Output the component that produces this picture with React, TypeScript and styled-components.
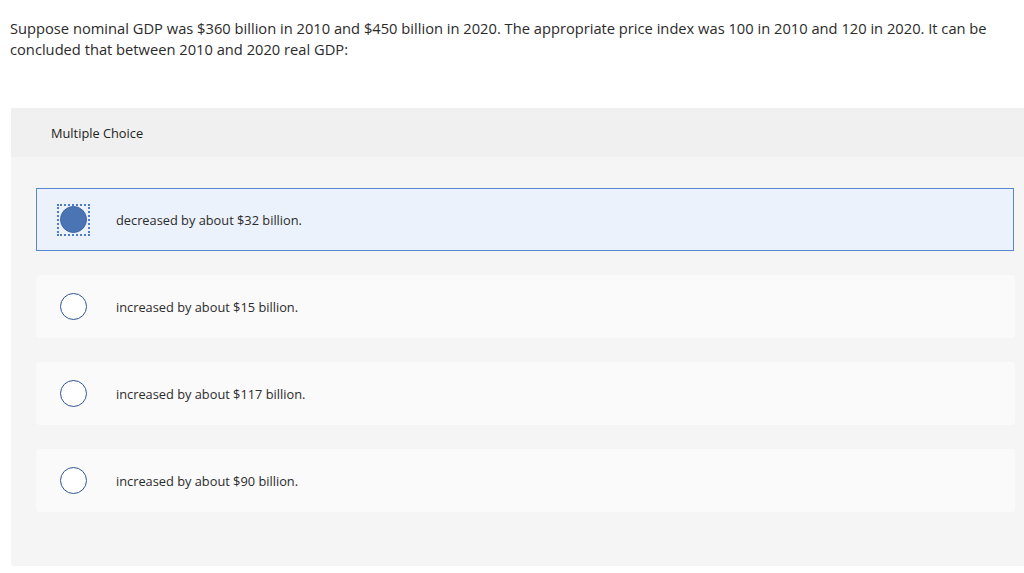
import React, { useState } from "react";
import styled, { createGlobalStyle } from "styled-components";

const GlobalStyle = createGlobalStyle`
  html, body {
    margin: 0;
    padding: 0;
    background: #ffffff;
    overflow: hidden;
  }
  body {
    font-family: "Open Sans", "Liberation Sans", Arial, sans-serif;
    color: #2b2b2b;
  }
`;

const choices = [
  "decreased by about $32 billion.",
  "increased by about $15 billion.",
  "increased by about $117 billion.",
  "increased by about $90 billion.",
];

function App() {
  const [selected, setSelected] = useState(0);

  return (
    <Page>
      <GlobalStyle />
      <Question>
        Suppose nominal GDP was $360 billion in 2010 and $450 billion in 2020.
        The appropriate price index was 100 in 2010 and 120 in 2020. It can be
        concluded that between 2010 and 2020 real GDP:
      </Question>
      <Panel>
        <PanelHeader>Multiple Choice</PanelHeader>
        <ChoiceList>
          {choices.map((text, i) => (
            <Choice
              key={text}
              $active={selected === i}
              onClick={() => setSelected(i)}
            >
              <RadioWrap $focused={selected === i}>
                <Radio $checked={selected === i} />
              </RadioWrap>
              <ChoiceText>{text}</ChoiceText>
            </Choice>
          ))}
        </ChoiceList>
      </Panel>
    </Page>
  );
}

export default App;

const Page = styled.div`
  padding: 18px 0 0 10px;
`;

const Question = styled.p`
  margin: 0;
  width: 1005px;
  font-size: 14.7px;
  line-height: 21px;
  color: #2b2b2b;
`;

const Panel = styled.div`
  margin: 48px 0 0 1px;
  background: #f5f5f5;
  border-radius: 0 0 0 3px;
`;

const PanelHeader = styled.div`
  height: 49px;
  display: flex;
  align-items: center;
  padding-left: 40px;
  background: #f0f0f0;
  font-size: 12.8px;
  color: #222;
`;

const ChoiceList = styled.div`
  display: flex;
  flex-direction: column;
  gap: 24px;
  padding: 31px 0 54px 25px;
`;

const Choice = styled.div<{ $active: boolean }>`
  width: ${(p) => (p.$active ? "978px" : "979px")};
  height: 63px;
  box-sizing: border-box;
  display: flex;
  align-items: center;
  padding-left: 24px;
  border-radius: ${(p) => (p.$active ? "0" : "3px")};
  cursor: pointer;
  background: ${(p) => (p.$active ? "#ebf2fb" : "#fafafa")};
  border: 1px solid ${(p) => (p.$active ? "#5687d0" : "#fafafa")};
`;

const RadioWrap = styled.div<{ $focused: boolean }>`
  width: 33px;
  height: 32px;
  box-sizing: border-box;
  margin-left: -4px;
  display: flex;
  align-items: center;
  justify-content: center;
  border: 2px dotted ${(p) => (p.$focused ? "#4f7cc4" : "transparent")};
`;

const Radio = styled.span<{ $checked: boolean }>`
  display: block;
  width: 27px;
  height: 27px;
  box-sizing: border-box;
  border-radius: 50%;
  border: 1px solid ${(p) => (p.$checked ? "#3b64a6" : "#2f5597")};
  background: ${(p) => (p.$checked ? "#4a74b4" : "#ffffff")};
`;

const ChoiceText = styled.span`
  margin-left: 26px;
  font-size: 12.8px;
  color: #2b2b2b;
`;
